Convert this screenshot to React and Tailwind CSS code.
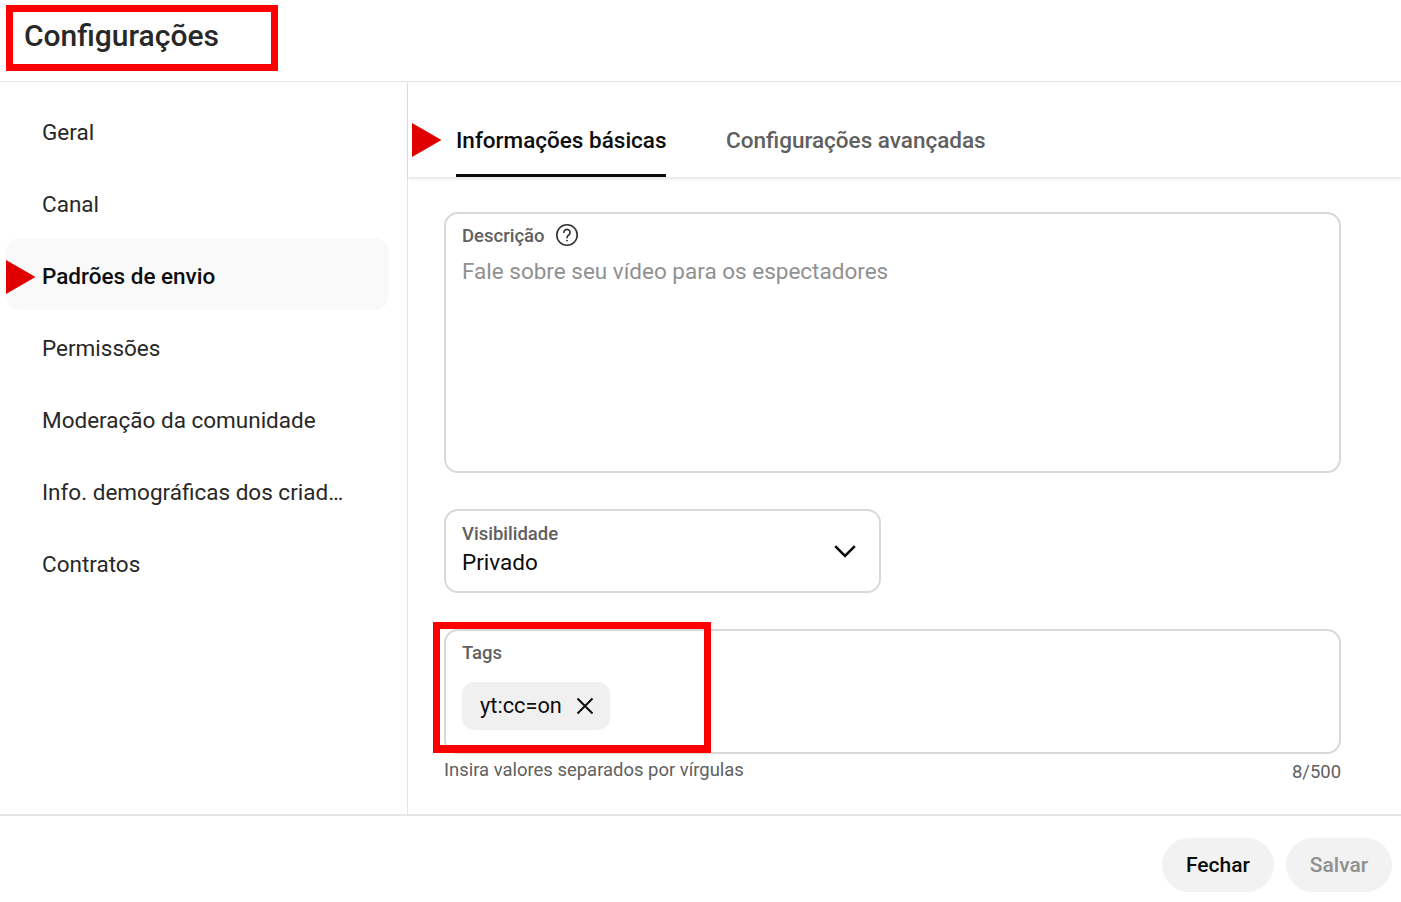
import React from "react";

const items = ["Geral", "Canal", "Padrões de envio", "Permissões", "Moderação da comunidade", "Info. demográficas dos criad…", "Contratos"];

function Triangle({ className }) {
  return (
    <svg className={className} width="30" height="34" viewBox="0 0 30 34">
      <polygon points="0,0 29.5,17 0,34" fill="#e00000" />
    </svg>
  );
}

export default function App() {
  return (
    <div className="relative w-[1401px] h-[902px] bg-white overflow-hidden flex flex-col font-['Roboto',sans-serif] text-[#0d0d0d]">
      <header className="h-[82px] shrink-0 border-b border-[#e5e5e5] pl-6 pt-[16px]">
        <h1 className="text-[30px] leading-[40px] font-medium text-[#282828]">Configurações</h1>
      </header>

      <div className="flex h-[732px] shrink-0">
        <nav className="w-[408px] shrink-0 border-r border-[#e5e5e5] pt-3 pl-[6px] pr-[18px]">
          {items.map((item) => (
            <div
              key={item}
              className={`h-[72px] pl-9 pt-[6px] flex items-center rounded-[14px] text-[22.5px] ${item === "Padrões de envio" ? "bg-[#f9f9f9] font-medium text-[#0d0d0d]" : "text-[#282828]"}`}
            >
              <span className="truncate w-[310px]">{item}</span>
            </div>
          ))}
        </nav>

        <main className="flex-1 min-w-0">
          <div className="h-[95px] flex gap-[60px] pl-12 shadow-[0_2px_3px_rgba(0,0,0,0.1)] text-[22.5px] font-medium">
            <div className="w-[210px] whitespace-nowrap h-[95px] flex items-center pt-[28px] border-b-[3px] border-[#0d0d0d] text-[#0d0d0d] pb-[3px]">Informações básicas</div>
            <div className="h-[95px] flex items-center pt-[28px] text-[#606060] pb-[6px]">Configurações avançadas</div>
          </div>

          <div className="pl-9 pr-[60px] pt-[35px]">
            <div className="h-[261px] rounded-[14px] border-2 border-[#d9d9d9] px-4 pt-[10px]">
              <div className="flex items-center gap-[10px] h-[24px] text-[18.5px] font-medium text-[#606060]">
                <span className="translate-y-[1px]">Descrição</span>
                <svg className="-translate-y-[1px]" width="24" height="24" viewBox="0 0 24 24" fill="none" stroke="#303030" strokeWidth="1.6">
                  <circle cx="12" cy="12" r="10.2" />
                  <path d="M8.9 9.4a3.1 3.1 0 1 1 4.9 2.6c-1.1.8-1.8 1.4-1.8 2.7" strokeLinecap="round" />
                  <circle cx="12" cy="17.6" r="0.9" fill="#303030" stroke="none" />
                </svg>
              </div>
              <div className="mt-[9px] text-[22.5px] leading-[28px] text-[#909090]">Fale sobre seu vídeo para os espectadores</div>
            </div>

            <div className="mt-9 w-[437px] h-[84px] rounded-[14px] border-2 border-[#d9d9d9] pl-4 pr-[22px] flex items-center justify-between">
              <div>
                <div className="text-[18.5px] leading-[24px] font-medium text-[#606060] -mt-[3px]">Visibilidade</div>
                <div className="text-[22.5px] leading-[30px] text-[#0d0d0d] mt-[1px]">Privado</div>
              </div>
              <svg width="24" height="16" viewBox="0 0 24 16" fill="none" stroke="#0d0d0d" strokeWidth="2.6">
                <path d="M2.2 3.2 12 13 21.8 3.2" />
              </svg>
            </div>

            <div className="mt-9 h-[125px] rounded-[14px] border-2 border-[#d9d9d9] px-4 pt-[10px]">
              <div className="text-[18.5px] leading-[24px] font-medium text-[#606060]">Tags</div>
              <div className="mt-[17px] w-[148px] h-[48px] rounded-[12px] bg-[#f0f0f0] pl-[18px] flex items-center gap-[14px] text-[21.75px] text-[#0d0d0d]">
                yt:cc=on
                <svg width="18" height="18" viewBox="0 0 18 18" fill="none" stroke="#0d0d0d" strokeWidth="2">
                  <path d="M1.5 1.5 16.5 16.5M16.5 1.5 1.5 16.5" />
                </svg>
              </div>
            </div>

            <div className="mt-[4px] flex justify-between text-[18.45px] leading-[24px] text-[#606060]">
              <span>Insira valores separados por vírgulas</span>
              <span className="pt-[2px]">8/500</span>
            </div>
          </div>
        </main>
      </div>

      <footer className="flex-1 border-t-2 border-[#e5e5e5] flex justify-end gap-3 pr-[9px] pt-[22px]">
        <button className="w-[112px] h-[54px] pt-[2px] rounded-full bg-[#f2f2f2] text-[21px] font-medium text-[#0d0d0d]">Fechar</button>
        <button className="w-[106px] h-[54px] pt-[2px] rounded-full bg-[#f2f2f2] text-[21px] font-medium text-[#909090]">Salvar</button>
      </footer>

      <div className="absolute left-[6px] top-[5px] w-[272px] h-[66px] border-[7px] border-[#ff0000]" />
      <div className="absolute left-[433px] top-[622px] w-[278px] h-[131px] border-[7px] border-[#ff0000] border-b-[8px]" />
      <Triangle className="absolute left-[412px] top-[123px]" />
      <Triangle className="absolute left-[6px] top-[260px]" />
    </div>
  );
}
